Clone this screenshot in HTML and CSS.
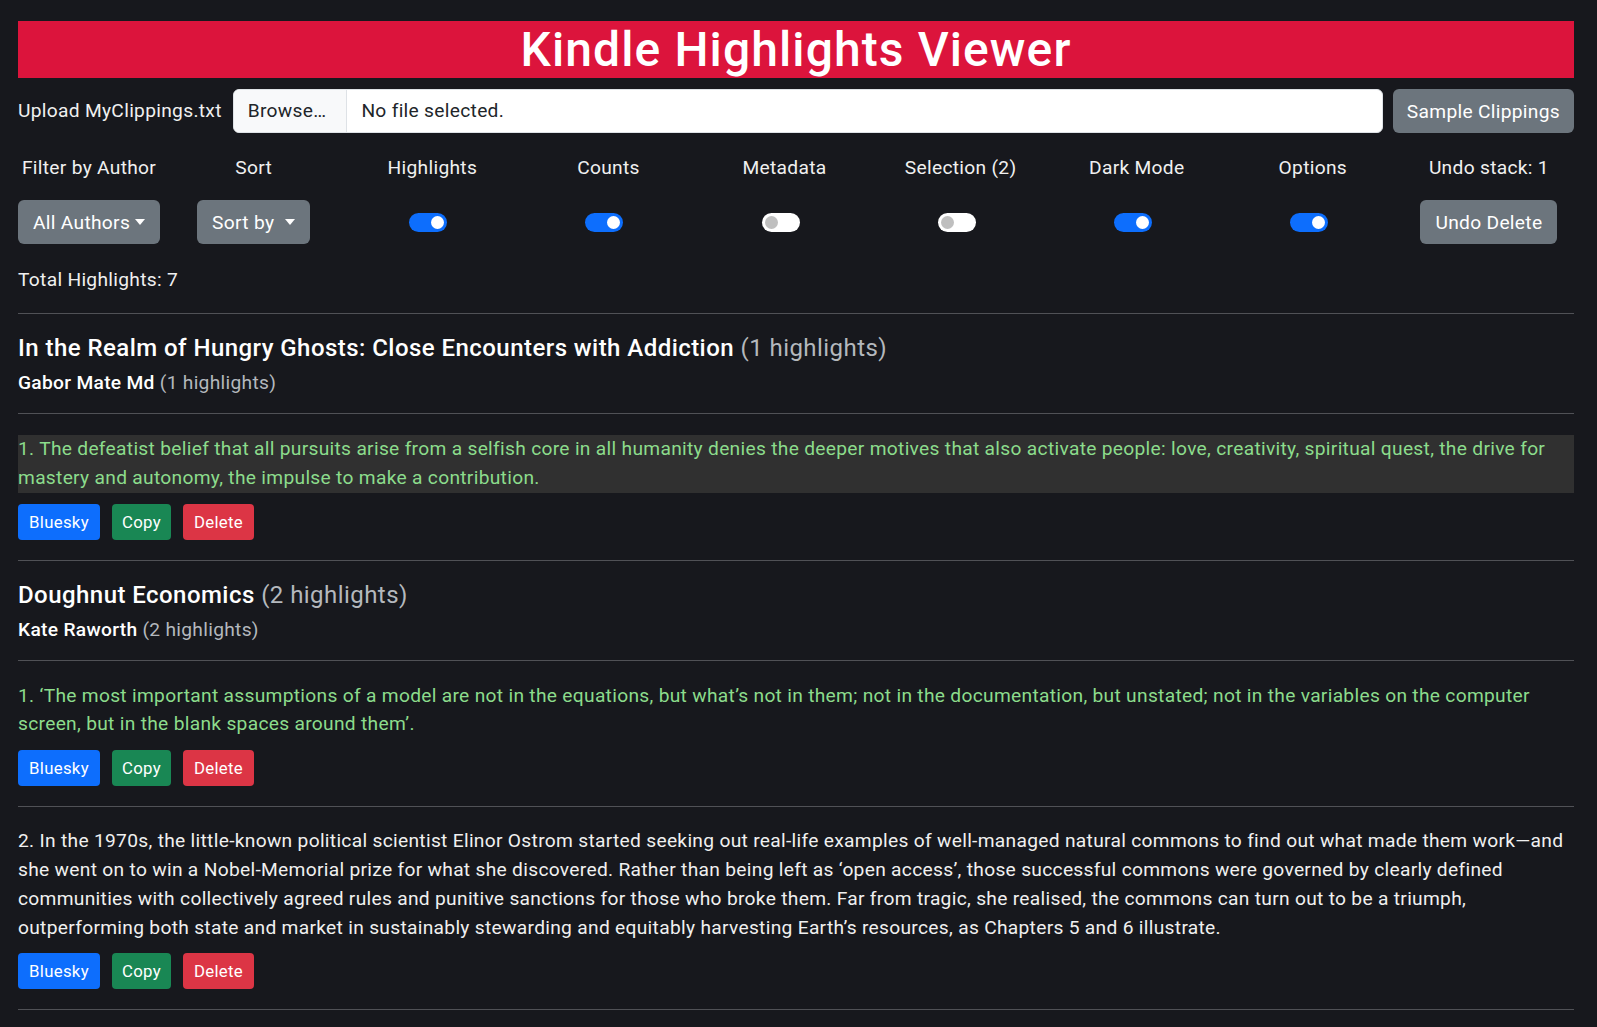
FILE: index.html
```html
<!DOCTYPE html>
<html lang="en">
<head>
<meta charset="utf-8">
<title>Kindle Highlights Viewer</title>
<link rel="stylesheet" href="styles.css">
</head>
<body>
<div class="page">
  <h1 class="banner">Kindle Highlights Viewer</h1>

  <div class="upload-row">
    <label class="upload-label">Upload MyClippings.txt</label>
    <div class="file-input">
      <span class="file-btn">Browse…</span>
      <span class="file-name">No file selected.</span>
    </div>
    <button class="btn btn-grey btn-md">Sample Clippings</button>
  </div>

  <div class="controls">
    <div class="ctrl">
      <div class="ctrl-label">Filter by Author</div>
      <div class="ctrl-body"><button class="btn btn-grey btn-md dropdown">All Authors</button></div>
    </div>
    <div class="ctrl ctrl-sort">
      <div class="ctrl-label">Sort</div>
      <div class="ctrl-body"><button class="btn btn-grey btn-md dropdown dropdown-spaced">Sort by</button></div>
    </div>
    <div class="ctrl-group">
      <div class="ctrl">
        <div class="ctrl-label">Highlights</div>
        <div class="ctrl-body"><span class="switch on"></span></div>
      </div>
      <div class="ctrl">
        <div class="ctrl-label">Counts</div>
        <div class="ctrl-body"><span class="switch on"></span></div>
      </div>
      <div class="ctrl">
        <div class="ctrl-label">Metadata</div>
        <div class="ctrl-body"><span class="switch"></span></div>
      </div>
      <div class="ctrl">
        <div class="ctrl-label">Selection (2)</div>
        <div class="ctrl-body"><span class="switch"></span></div>
      </div>
      <div class="ctrl">
        <div class="ctrl-label">Dark Mode</div>
        <div class="ctrl-body"><span class="switch on"></span></div>
      </div>
      <div class="ctrl">
        <div class="ctrl-label">Options</div>
        <div class="ctrl-body"><span class="switch on"></span></div>
      </div>
      <div class="ctrl">
        <div class="ctrl-label">Undo stack: 1</div>
        <div class="ctrl-body"><button class="btn btn-grey btn-md">Undo Delete</button></div>
      </div>
    </div>
  </div>

  <p class="total">Total Highlights: 7</p>
  <hr class="rule">

  <section class="book">
    <h3 class="book-title">In the Realm of Hungry Ghosts: Close Encounters with Addiction <span class="count">(1 highlights)</span></h3>
    <div class="book-author">Gabor Mate Md <span class="count">(1 highlights)</span></div>
    <hr class="rule rule-head">
    <div class="highlight">
      <p class="hl-text selected shaded">1. The defeatist belief that all pursuits arise from a selfish core in all humanity denies the deeper motives that also activate people: love, creativity, spiritual quest, the drive for mastery and autonomy, the impulse to make a contribution.</p>
      <div class="hl-actions">
        <button class="btn btn-sm btn-blue">Bluesky</button>
        <button class="btn btn-sm btn-green">Copy</button>
        <button class="btn btn-sm btn-red">Delete</button>
      </div>
    </div>
    <hr class="rule">
  </section>

  <section class="book">
    <h3 class="book-title">Doughnut Economics <span class="count">(2 highlights)</span></h3>
    <div class="book-author">Kate Raworth <span class="count">(2 highlights)</span></div>
    <hr class="rule rule-head">
    <div class="highlight">
      <p class="hl-text selected">1. ‘The most important assumptions of a model are not in the equations, but what’s not in them; not in the documentation, but unstated; not in the variables on the computer screen, but in the blank spaces around them’.</p>
      <div class="hl-actions">
        <button class="btn btn-sm btn-blue">Bluesky</button>
        <button class="btn btn-sm btn-green">Copy</button>
        <button class="btn btn-sm btn-red">Delete</button>
      </div>
    </div>
    <hr class="rule">
    <div class="highlight">
      <p class="hl-text">2. In the 1970s, the little-known political scientist Elinor Ostrom started seeking out real-life examples of well-managed natural commons to find out what made them work—and she went on to win a Nobel-Memorial prize for what she discovered. Rather than being left as ‘open access’, those successful commons were governed by clearly defined communities with collectively agreed rules and punitive sanctions for those who broke them. Far from tragic, she realised, the commons can turn out to be a triumph, outperforming both state and market in sustainably stewarding and equitably harvesting Earth’s resources, as Chapters 5 and 6 illustrate.</p>
      <div class="hl-actions">
        <button class="btn btn-sm btn-blue">Bluesky</button>
        <button class="btn btn-sm btn-green">Copy</button>
        <button class="btn btn-sm btn-red">Delete</button>
      </div>
    </div>
    <hr class="rule">
  </section>

  <div class="scroll-top"><span class="scroll-icon"></span></div>
</div>
</body>
</html>
```

FILE: styles.css
```css
html, body {
  margin: 0;
  padding: 0;
}

body {
  background: #17181d;
  color: #f0f0f0;
  font-family: Roboto, "Liberation Sans", sans-serif;
  font-size: 19.2px;
  line-height: 28.8px;
  letter-spacing: 0.3px;
  overflow: hidden;
}

.page {
  padding: 21px 23px 0 18px;
}

.banner {
  margin: 0 0 11px;
  height: 57px;
  line-height: 57px;
  background: #dc143c;
  color: #fff;
  text-align: center;
  font-size: 48px;
  font-weight: 500;
  letter-spacing: 1.1px;
}

.upload-row {
  display: flex;
  align-items: center;
  height: 44px;
  margin-bottom: 20px;
}

.upload-label {
  margin-right: 11px;
}

.file-input {
  flex: 1;
  display: flex;
  height: 44px;
  background: #fff;
  border: 1px solid #dee2e6;
  border-radius: 6px;
  overflow: hidden;
  box-sizing: border-box;
  color: #212529;
}

.file-btn {
  display: flex;
  align-items: center;
  padding: 0 20px 0 14px;
  background: #f8f9fa;
  border-right: 1px solid #dee2e6;
}

.file-name {
  display: flex;
  align-items: center;
  padding: 0 14px;
}

.btn {
  font-family: inherit;
  letter-spacing: inherit;
  border: 1px solid transparent;
  color: #fff;
  cursor: pointer;
  box-sizing: border-box;
}

.btn-md {
  height: 44px;
  padding: 0 14px;
  font-size: 19.2px;
  border-radius: 6px;
}

.upload-row .btn-md {
  margin-left: 10px;
  padding: 0 13px;
}

.btn-grey {
  background: #6c757d;
}

.dropdown::after {
  content: "";
  display: inline-block;
  margin-left: 5px;
  vertical-align: 4px;
  border-top: 6px solid #fff;
  border-left: 5.5px solid transparent;
  border-right: 5.5px solid transparent;
}

.dropdown-spaced::after {
  margin-left: 11px;
}

.controls {
  display: flex;
  gap: 34px;
  margin-right: -3px;
}

.ctrl-sort {
  margin-left: 3px;
}

.ctrl-group {
  flex: 1;
  display: flex;
}

.ctrl-group .ctrl {
  flex: 1;
}

.ctrl {
  display: flex;
  flex-direction: column;
  align-items: center;
}

.ctrl-label {
  line-height: 29px;
  white-space: nowrap;
}

.ctrl-body {
  margin-top: 18px;
  height: 44px;
  display: flex;
  align-items: center;
}

.switch {
  position: relative;
  display: block;
  width: 38px;
  height: 19px;
  margin-right: 8px;
  border-radius: 10px;
  background: #fff;
  box-sizing: border-box;
}

.switch::after {
  content: "";
  position: absolute;
  top: 3px;
  left: 3px;
  width: 13px;
  height: 13px;
  border-radius: 50%;
  background: #bfbfbf;
}

.switch.on {
  background: #0d6efd;
}

.switch.on::after {
  left: auto;
  right: 3px;
  background: #fff;
}

.total {
  margin: 21px 0 0;
  line-height: 29px;
}

.rule {
  border: 0;
  border-top: 1px solid #505156;
  margin: 19px 0 20px;
}

.book .rule {
  margin: 20px 0 20px;
}

.book .rule-head {
  margin: 16px 0 21px;
}

.book-title {
  margin: 0 0 5px;
  font-size: 24px;
  line-height: 29px;
  font-weight: 500;
  letter-spacing: 0.45px;
  color: #fff;
}

.book-title .count {
  font-weight: 400;
  color: #b4b8bd;
}

.book-author {
  line-height: 29px;
  font-weight: 500;
  color: #fff;
}

.book-author .count {
  font-weight: 400;
  color: #b4b8bd;
}

.hl-text {
  margin: 0;
  line-height: 28.8px;
}

.hl-text.selected {
  color: #8cdc8c;
}

.hl-text.shaded {
  background: #303030;
}

.hl-actions {
  display: flex;
  gap: 12px;
  margin-top: 11px;
}

.btn-sm {
  height: 36px;
  padding: 0 10px;
  font-size: 16.8px;
  border-radius: 4px;
}

.btn-green {
  background: #198754;
  padding: 0 9px;
}

.btn-blue {
  background: #0d6efd;
}

.btn-red {
  background: #dc3545;
}

.scroll-top {
  width: 36px;
  height: 36px;
  margin: 4px auto 0;
  border-radius: 50%;
  background: #111214;
  border: 1px solid #2e2f33;
  box-sizing: border-box;
  display: flex;
  justify-content: center;
}

.scroll-icon {
  display: block;
  width: 12px;
  height: 6px;
  margin-top: 10px;
  border-top: 2px solid #888;
  border-bottom: 2px solid #888;
}
```
